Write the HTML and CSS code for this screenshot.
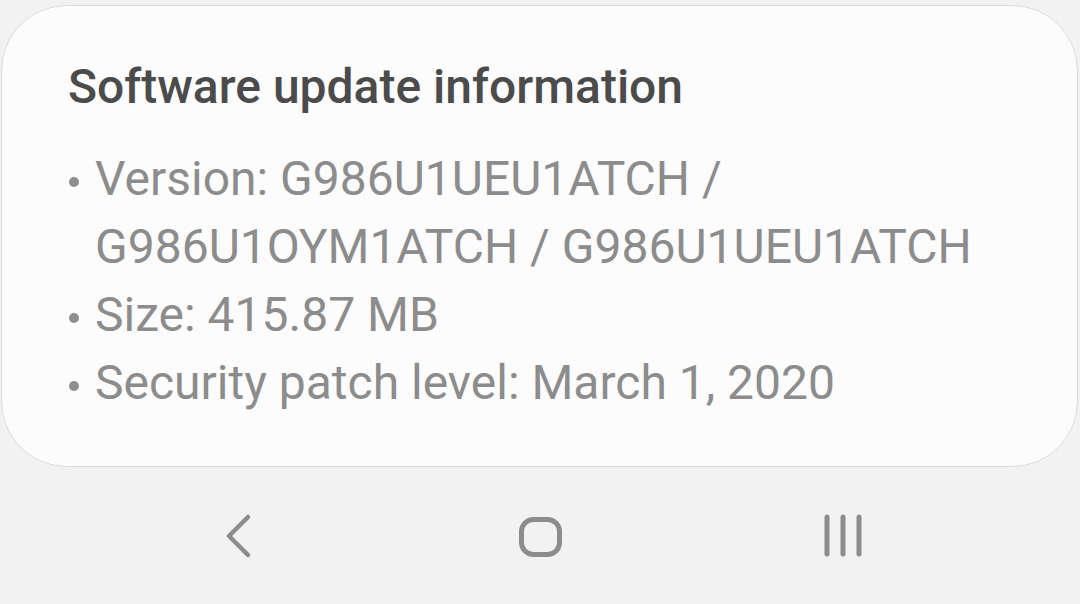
FILE: index.html
```html
<!doctype html>
<html lang="en">
	<head>
		<title>Software update</title>
		<link rel="stylesheet" href="styles.css">
	</head>
	<body>
		<!-- Update details card -->
		<div class="card">
			<h1 class="card-title">Software update information</h1>
			<ul class="info-list">
				<li>Version: G986U1UEU1ATCH / G986U1OYM1ATCH / G986U1UEU1ATCH</li>
				<li>Size: 415.87 MB</li>
				<li>Security patch level: March 1, 2020</li>
			</ul>
		</div>

		<!-- Navigation bar -->
		<div class="nav-bar">
			<div class="nav-btn">
				<svg width="40" height="50" viewBox="0 0 40 50">
					<polyline points="30,6 11,25 30,44" fill="none" stroke="#8c8c8c" stroke-width="4.5" stroke-linecap="round" stroke-linejoin="round"/>
				</svg>
			</div>
			<div class="nav-btn">
				<svg width="50" height="50" viewBox="0 0 50 50">
					<rect x="6.5" y="8.5" width="38" height="35" rx="12" fill="none" stroke="#8c8c8c" stroke-width="5"/>
				</svg>
			</div>
			<div class="nav-btn">
				<svg width="50" height="50" viewBox="0 0 50 50">
					<line x1="10" y1="6" x2="10" y2="43" stroke="#8c8c8c" stroke-width="5" stroke-linecap="round"/>
					<line x1="26" y1="6" x2="26" y2="43" stroke="#8c8c8c" stroke-width="5" stroke-linecap="round"/>
					<line x1="42" y1="6" x2="42" y2="43" stroke="#8c8c8c" stroke-width="5" stroke-linecap="round"/>
				</svg>
			</div>
		</div>
	</body>
</html>
```

FILE: styles.css
```css
/* Page setup */

body {
	margin: 0;
	background-color: #f2f2f2;
	font-family: Roboto, "Liberation Sans", sans-serif;
}

/* Card */

.card {
	margin: 5px 2px 0 1px;
	height: 462px;
	box-sizing: border-box;
	background: #fcfcfc;
	border: 1px solid #dcdcdc;
	border-radius: 66px;
	padding: 51px 40px 0 66px;
}

.card-title {
	margin: 0;
	font-size: 48px;
	font-weight: 500;
	line-height: 60px;
	color: #4b4b4b;
}

.info-list {
	list-style: none;
	margin: 28px 0 0 0;
	padding: 0 0 0 27px;
	font-size: 48px;
	line-height: 68px;
	color: #8c8c8c;
}

.info-list li { position: relative; }

.info-list li::before {
	content: "";
	position: absolute;
	left: -26px;
	top: 32px;
	width: 10px;
	height: 10px;
	border-radius: 50%;
	background: #8f8f8f;
}

/* Navigation bar */

.nav-bar {
	display: flex;
	justify-content: center;
	align-items: center;
	gap: 202px;
	height: 137px;
}

.nav-btn {
	width: 100px;
	display: flex;
	justify-content: center;
}

.nav-btn svg { display: block; }
```
